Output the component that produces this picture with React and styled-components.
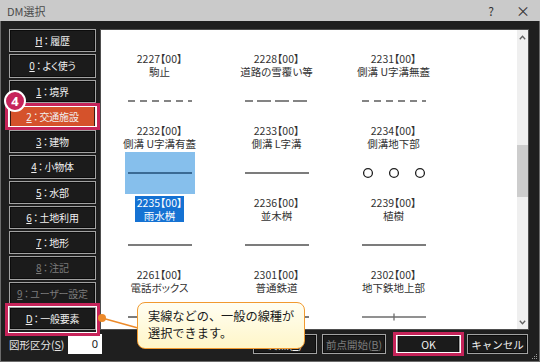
import React from 'react';
import styled, { createGlobalStyle } from 'styled-components';

const FONT = `"Noto Sans CJK JP", "Noto Sans", sans-serif`;

const GlobalStyle = createGlobalStyle`
  html, body { margin: 0; padding: 0; background: #ffffff; }
  body { font-family: ${FONT}; }
`;

const Window = styled.div`
  position: relative;
  width: 540px;
  height: 362px;
  display: flex;
  flex-direction: column;
  overflow: hidden;
  font-family: ${FONT};
`;

const TitleBar = styled.div`
  height: 21px;
  flex: none;
  display: flex;
  align-items: center;
  background: #cacaca;
  padding: 0 1px 0 7px;
  font-size: 11px;
  color: #4a4a4a;
`;

const Title = styled.span`
  flex: 1;
`;

const TitleButton = styled.span`
  width: 32px;
  text-align: center;
  font-size: ${(p) => p.$size || 12}px;
  color: #333;
  line-height: 21px;
`;

const Frame = styled.div`
  position: relative;
  flex: 1;
  display: flex;
  flex-direction: column;
  background: #1f1f1f;
  border: 1px solid #6c6c6c;
  border-top: none;
  padding: 8px 10px 0 8px;
`;

const Body = styled.div`
  height: 301px;
  flex: none;
  display: flex;
  gap: 4px;
`;

const Sidebar = styled.div`
  width: 87px;
  flex: none;
  display: flex;
  flex-direction: column;
  gap: 2px;
`;

const SideButton = styled.div`
  position: relative;
  flex: 1;
  display: flex;
  align-items: center;
  justify-content: center;
  background: ${(p) => (p.$active ? '#d5522b' : '#1b1b1b')};
  border: 1px solid ${(p) => (p.$active ? '#f2f2f2' : '#a2a2a2')};
  box-shadow: inset 0 0 0 1px ${(p) => (p.$active ? '#3a1a10' : '#0c0c0c')};
  color: ${(p) => (p.$disabled ? '#7c7c7c' : '#f0f0f0')};
  font-size: 10px;
  letter-spacing: -0.2px;
  font-feature-settings: "palt" 1;
  white-space: nowrap;

  &::after {
    content: '';
    display: ${(p) => (p.$mark ? 'block' : 'none')};
    position: absolute;
    inset: ${(p) => p.$mark || '0'};
    border: 3px solid #c6245a;
    box-shadow: inset 0 0 0 1px #ffffff;
    pointer-events: none;
  }
`;

const Key = styled.span`
  text-decoration: underline;
  text-underline-offset: 1px;
`;

const Colon = styled.span`
  margin: 0 1.5px;
`;

const Badge = styled.div`
  position: absolute;
  left: -6px;
  top: -16px;
  width: 18px;
  height: 18px;
  border-radius: 50%;
  background: #c6245a;
  border: 2px solid #ffffff;
  color: #ffffff;
  font-family: "Noto Sans", sans-serif;
  font-weight: 700;
  font-size: 13px;
  line-height: 18px;
  letter-spacing: 0;
  text-align: center;
  z-index: 2;
`;

const List = styled.div`
  flex: 1;
  display: flex;
  border: 1px solid #4e4e4e;
  background: #ffffff;
  overflow: hidden;
`;

const Viewport = styled.div`
  flex: 1;
  overflow: hidden;
`;

const Grid = styled.div`
  display: grid;
  grid-template-columns: repeat(3, 117px);
  grid-auto-rows: 72px;
  margin-top: -24px;
`;

const Item = styled.div`
  display: flex;
  flex-direction: column;
  align-items: center;
`;

const IconBox = styled.div`
  width: 70px;
  height: 42px;
  margin-top: 2px;
  display: flex;
  align-items: center;
  justify-content: center;
  background: ${(p) => (p.$selected ? '#86bfec' : 'transparent')};
`;

const Label = styled.div`
  margin-top: 2px;
  padding: 0 2px;
  font-size: 10.5px;
  line-height: 13px;
  text-align: center;
  color: ${(p) => (p.$selected ? '#ffffff' : '#333333')};
  background: ${(p) => (p.$selected ? '#1572d3' : 'transparent')};
  font-feature-settings: "palt" 1;
  white-space: nowrap;
`;

const Scrollbar = styled.div`
  width: 11px;
  flex: none;
  display: flex;
  flex-direction: column;
  background: #efefef;
`;

const Arrow = styled.div`
  height: 14px;
  flex: none;
  display: flex;
  align-items: center;
  justify-content: center;
`;

const Track = styled.div`
  flex: 1;
`;

const Thumb = styled.div`
  margin-top: ${(p) => p.$top}px;
  height: ${(p) => p.$height}px;
  background: #cdcdcd;
`;

const Footer = styled.div`
  flex: 1;
  display: flex;
  align-items: flex-start;
  padding-top: 4px;
`;

const Field = styled.div`
  display: flex;
  align-items: center;
  gap: 1px;
  height: 20px;
  color: #e6e6e6;
  font-size: 10.5px;
`;

const FieldLabel = styled.span`
  width: 58px;
  white-space: nowrap;
`;

const NumberBox = styled.div`
  width: 34px;
  height: 20px;
  background: #ffffff;
  color: #222;
  font-size: 11px;
  line-height: 20px;
  text-align: right;
  padding-right: 4px;
  box-sizing: border-box;
  font-family: "Noto Sans", sans-serif;
`;

const ButtonRow = styled.div`
  margin-left: auto;
  margin-right: 1px;
  display: flex;
  gap: 5px;
`;

const FooterButton = styled.div`
  position: relative;
  width: ${(p) => p.$w}px;
  height: 20px;
  box-sizing: border-box;
  display: flex;
  align-items: center;
  justify-content: center;
  margin: ${(p) => p.$margin || '0'};
  background: #1b1b1b;
  border: 1px solid #a2a2a2;
  box-shadow: inset 0 0 0 1px #0c0c0c;
  color: ${(p) => (p.$disabled ? '#7c7c7c' : '#f0f0f0')};
  font-size: 10.5px;
  white-space: nowrap;

  &::after {
    content: '';
    display: ${(p) => (p.$mark ? 'block' : 'none')};
    position: absolute;
    inset: ${(p) => p.$mark || '0'};
    border: 3px solid #c6245a;
    box-shadow: inset 0 0 0 1px #ffffff;
    pointer-events: none;
  }
`;

const Grip = styled.svg`
  position: absolute;
  right: 1px;
  bottom: 1px;
`;

const Callout = styled.div`
  position: absolute;
  left: 137px;
  top: 302px;
  width: 168px;
  height: 47px;
  box-sizing: border-box;
  padding: 5px 0 0 10px;
  background: linear-gradient(#fffef2, #fff6c8);
  border: 1.5px solid #f19a30;
  border-radius: 8px;
  font-size: 12.2px;
  line-height: 17px;
  color: #1a1a1a;
  z-index: 5;
`;

const Connector = styled.svg`
  position: absolute;
  left: 96px;
  top: 312px;
  z-index: 4;
  overflow: visible;
`;

const sideButtons = [
  { key: 'H', text: '履歴' },
  { key: '0', text: 'よく使う' },
  { key: '1', text: '境界' },
  { key: '2', text: '交通施設', active: true, mark: '-3px -5px', badge: '4' },
  { key: '3', text: '建物' },
  { key: '4', text: '小物体' },
  { key: '5', text: '水部' },
  { key: '6', text: '土地利用' },
  { key: '7', text: '地形' },
  { key: '8', text: '注記', disabled: true },
  { key: '9', text: 'ユーザー設定', disabled: true },
  { key: 'D', text: '一般要素', mark: '-5px -5px -7px -5px' },
];

const items = [
  { code: '2227', name: '駒止', icon: 'none' },
  { code: '2228', name: '道路の雪覆い等', icon: 'none' },
  { code: '2231', name: '側溝 U字溝無蓋', icon: 'none' },
  { code: '2232', name: '側溝 U字溝有蓋', icon: 'short' },
  { code: '2233', name: '側溝 L字溝', icon: 'long' },
  { code: '2234', name: '側溝地下部', icon: 'short' },
  { code: '2235', name: '雨水桝', icon: 'line', selected: true },
  { code: '2236', name: '並木桝', icon: 'line' },
  { code: '2239', name: '植樹', icon: 'circles' },
  { code: '2261', name: '電話ボックス', icon: 'line' },
  { code: '2301', name: '普通鉄道', icon: 'line' },
  { code: '2302', name: '地下鉄地上部', icon: 'line' },
  { code: null, icon: 'line' },
  { code: null, icon: 'line' },
  { code: null, icon: 'tick' },
];

function LineIcon({ kind, selected }) {
  const c = selected ? '#3a6a94' : '#7c7c7c';
  if (kind === 'none') return null;
  if (kind === 'short')
    return (
      <svg width="64" height="10">
        <line x1="0" y1="5" x2="64" y2="5" stroke="#5c5c5c" strokeWidth="1.6" strokeDasharray="7 5" />
      </svg>
    );
  if (kind === 'long')
    return (
      <svg width="64" height="10">
        <line x1="0" y1="5" x2="64" y2="5" stroke="#5c5c5c" strokeWidth="1.6" strokeDasharray="14 4" strokeDashoffset="6" />
      </svg>
    );
  if (kind === 'circles')
    return (
      <svg width="64" height="12">
        {[6, 32, 58].map((cx) => (
          <circle key={cx} cx={cx} cy="6" r="4.4" fill="none" stroke="#1e1e1e" strokeWidth="1.3" />
        ))}
      </svg>
    );
  if (kind === 'tick')
    return (
      <svg width="64" height="10">
        <line x1="0" y1="5" x2="64" y2="5" stroke="#6c6c6c" strokeWidth="1.5" />
        <line x1="32" y1="1.5" x2="32" y2="8.5" stroke="#6c6c6c" strokeWidth="1.3" />
      </svg>
    );
  return (
    <svg width="64" height="10">
      <line x1="0" y1="5" x2="64" y2="5" stroke={c} strokeWidth="2" />
    </svg>
  );
}

function Chevron({ up }) {
  return (
    <svg width="7" height="5" viewBox="0 0 7 5">
      <polyline
        points={up ? '0.8,4.2 3.5,1.2 6.2,4.2' : '0.8,0.8 3.5,3.8 6.2,0.8'}
        fill="none"
        stroke="#606060"
        strokeWidth="1.3"
      />
    </svg>
  );
}

export default function App() {
  return (
    <>
      <GlobalStyle />
      <Window>
        <TitleBar>
          <Title>DM選択</Title>
          <TitleButton>?</TitleButton>
          <TitleButton $size={14}>×</TitleButton>
        </TitleBar>
        <Frame>
          <Body>
            <Sidebar>
              {sideButtons.map((b) => (
                <SideButton key={b.key} $active={b.active} $disabled={b.disabled} $mark={b.mark}>
                  {b.badge && <Badge>{b.badge}</Badge>}
                  <Key>{b.key}</Key>
                  <Colon>：</Colon>
                  {b.text}
                </SideButton>
              ))}
            </Sidebar>
            <List>
              <Viewport>
                <Grid>
                  {items.map((it, i) => (
                    <Item key={i}>
                      <IconBox $selected={it.selected}>
                        <LineIcon kind={it.icon} selected={it.selected} />
                      </IconBox>
                      {it.code && (
                        <Label $selected={it.selected}>
                          {it.code}【00】
                          <br />
                          {it.name}
                        </Label>
                      )}
                    </Item>
                  ))}
                </Grid>
              </Viewport>
              <Scrollbar>
                <Arrow>
                  <Chevron up />
                </Arrow>
                <Track>
                  <Thumb $top={101} $height={52} />
                </Track>
                <Arrow>
                  <Chevron />
                </Arrow>
              </Scrollbar>
            </List>
          </Body>
          <Footer>
            <Field>
              <FieldLabel>
                図形区分(<Key>S</Key>)
              </FieldLabel>
              <NumberBox>0</NumberBox>
            </Field>
            <ButtonRow>
              <FooterButton $w={64}>終点(<Key>E</Key>)</FooterButton>
              <FooterButton $w={64} $disabled>
                前点開始(<Key>B</Key>)
              </FooterButton>
              <FooterButton $w={63} $margin="0 2px 0 6px" $mark="-3px -5px">
                OK
              </FooterButton>
              <FooterButton $w={61}>キャンセル</FooterButton>
            </ButtonRow>
          </Footer>
          <Grip width="7" height="7" viewBox="0 0 7 7">
            {[
              [5.5, 1.5],
              [5.5, 3.5],
              [3.5, 3.5],
              [5.5, 5.5],
              [3.5, 5.5],
              [1.5, 5.5],
            ].map(([x, y]) => (
              <rect key={`${x}-${y}`} x={x - 0.5} y={y - 0.5} width="1" height="1" fill="#9a9a9a" />
            ))}
          </Grip>
        </Frame>
        <Connector width="44" height="22">
          <line x1="6" y1="6" x2="42" y2="16" stroke="#ec8a2a" strokeWidth="1.5" />
          <circle cx="6" cy="6" r="4" fill="#ec8a2a" />
        </Connector>
        <Callout>
          実線などの、一般の線種が
          <br />
          選択できます。
        </Callout>
      </Window>
    </>
  );
}
